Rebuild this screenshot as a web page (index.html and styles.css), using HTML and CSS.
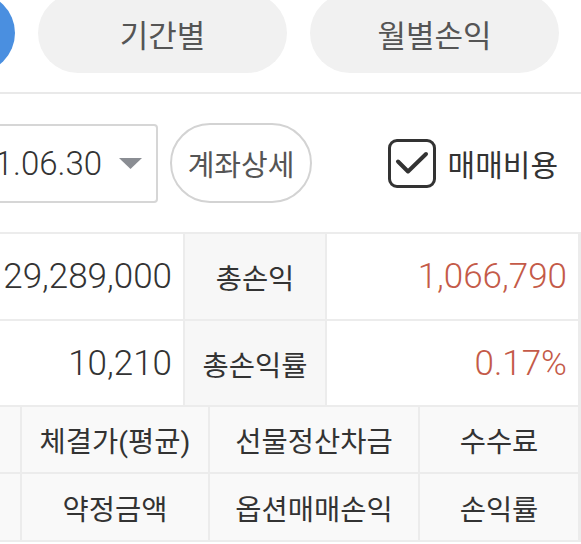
FILE: index.html
```html
<!DOCTYPE html>
<html lang="ko">
<head>
<meta charset="utf-8">
<title>손익</title>
<link rel="stylesheet" href="styles.css">
</head>
<body>
<div class="page">
  <div class="tabs">
    <div class="tab tab-active">일별</div>
    <div class="tab">기간별</div>
    <div class="tab">월별손익</div>
  </div>
  <div class="controls">
    <div class="select">
      <span class="select-text">2021.06.30</span>
      <svg class="caret" width="23" height="11" viewBox="0 0 23 11"><path d="M0 0 H23 L11.5 11 Z" fill="#8a8d93"/></svg>
    </div>
    <div class="btn-outline">계좌상세</div>
    <label class="check">
      <span class="check-box">
        <svg width="34" height="24" viewBox="0 0 34 24"><path d="M3 10.5 L13 20.5 L31 3" fill="none" stroke="#333" stroke-width="4" stroke-linecap="round" stroke-linejoin="round"/></svg>
      </span>
      <span class="check-label">매매비용</span>
    </label>
  </div>
  <div class="summary">
    <div class="cell value">29,289,000</div>
    <div class="cell label">총손익</div>
    <div class="cell value red">1,066,790</div>
    <div class="cell value">10,210</div>
    <div class="cell label">총손익률</div>
    <div class="cell value red">0.17%</div>
  </div>
  <div class="heads">
    <div class="hcell"></div>
    <div class="hcell">체결가(평균)</div>
    <div class="hcell">선물정산차금</div>
    <div class="hcell">수수료</div>
    <div class="hcell"></div>
    <div class="hcell">약정금액</div>
    <div class="hcell">옵션매매손익</div>
    <div class="hcell">손익률</div>
  </div>
</div>
</body>
</html>
```
FILE: styles.css
```css
html, body {
  margin: 0;
  padding: 0;
  background: #ffffff;
  overflow: hidden;
}
body {
  font-family: Roboto, "Noto Sans CJK KR", sans-serif;
  font-weight: 400;
  color: #333333;
  width: 581px;
}
.page {
  width: 581px;
}
.tabs {
  display: flex;
  gap: 23px;
  margin-top: -7px;
  margin-left: -234px;
  padding-bottom: 19px;
  border-bottom: 2px solid #e9e9e9;
}
.tab {
  flex: 0 0 249px;
  height: 80px;
  border-radius: 40px;
  background: #f1f1f1;
  color: #555555;
  font-size: 31px;
  display: flex;
  align-items: center;
  justify-content: center;
}
.tab-active {
  background: #4a8fe0;
  color: #ffffff;
}
.controls {
  display: flex;
  align-items: center;
  height: 138px;
  padding-right: 23px;
}
.select {
  box-sizing: border-box;
  flex: 0 0 228px;
  margin-left: -70px;
  height: 79px;
  border: 2px solid #d6d6d6;
  border-radius: 4px;
  display: flex;
  align-items: center;
  justify-content: flex-end;
  padding-right: 14px;
  gap: 17px;
}
.select-text {
  font-size: 33px;
  font-weight: 300;
  color: #333333;
  white-space: nowrap;
}
.caret {
  display: block;
}
.btn-outline {
  box-sizing: border-box;
  margin-left: 12px;
  width: 142px;
  height: 80px;
  border: 2px solid #d3d3d3;
  border-radius: 40px;
  display: flex;
  align-items: center;
  justify-content: center;
  font-size: 29px;
  color: #555555;
}
.check {
  margin-left: auto;
  display: flex;
  align-items: center;
  gap: 12px;
}
.check-box {
  box-sizing: border-box;
  width: 48px;
  height: 49px;
  border: 3.5px solid #333333;
  border-radius: 9px;
  display: flex;
  align-items: center;
  justify-content: center;
}
.check-box svg {
  display: block;
}
.check-label {
  font-size: 30px;
  color: #333333;
}
.summary {
  display: grid;
  grid-template-columns: 183px 140px 251px;
  grid-template-rows: 85px 84px;
  gap: 2px;
  width: 580px;
  padding: 2px 2px 0 0;
  background: #ececec;
}
.cell {
  display: flex;
  align-items: center;
  background: #ffffff;
}
.value {
  justify-content: flex-end;
  padding-right: 11px;
  font-size: 35px;
  font-weight: 300;
  color: #333333;
  white-space: nowrap;
}
.red {
  color: #c45a48;
}
.label {
  justify-content: center;
  background: #f7f7f7;
  font-size: 28.5px;
  color: #333333;
}
.heads {
  display: grid;
  grid-template-columns: 20px 186px 208px 158px;
  grid-template-rows: 65px 66px;
  gap: 2px;
  width: 580px;
  padding: 2px 2px 2px 0;
  background: #ececec;
}
.hcell {
  display: flex;
  align-items: center;
  justify-content: center;
  background: #f9f9f9;
  font-size: 28.5px;
  color: #333333;
  white-space: nowrap;
}
```
